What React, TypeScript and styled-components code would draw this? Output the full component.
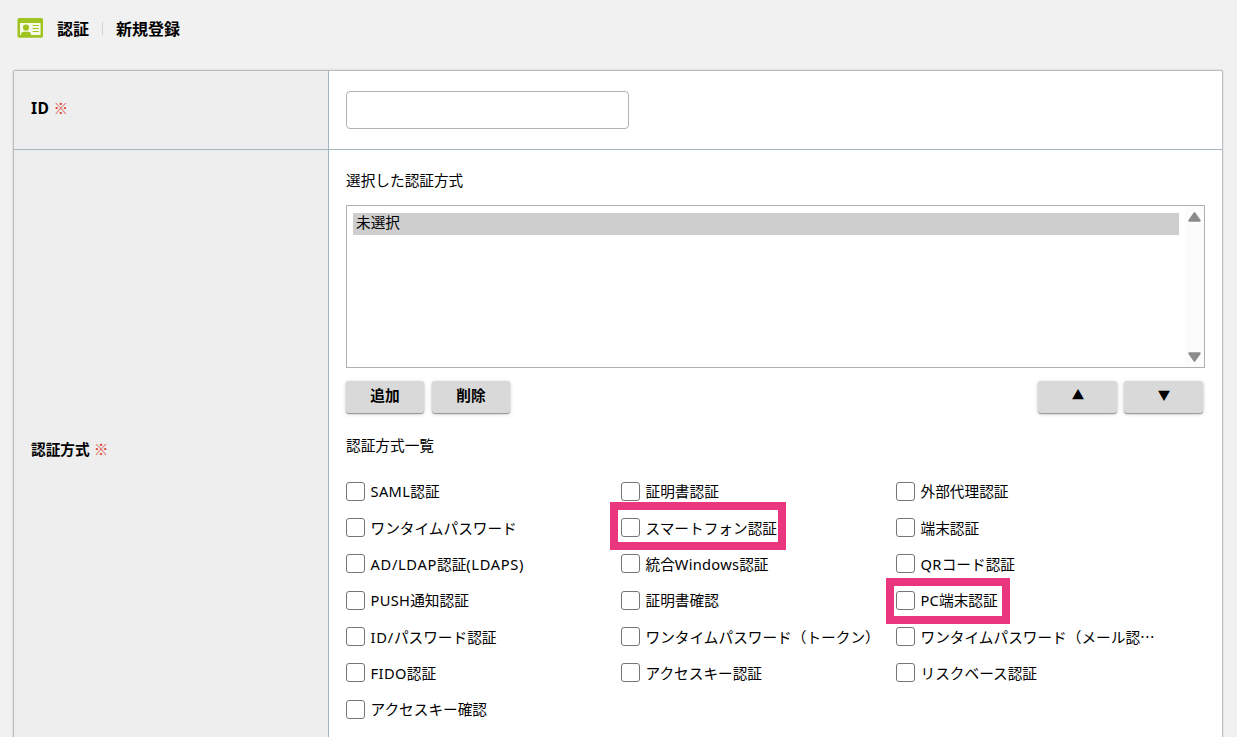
import React from "react";
import styled, { createGlobalStyle } from "styled-components";

const GlobalStyle = createGlobalStyle`
  *, *::before, *::after { box-sizing: border-box; }
  body {
    margin: 0;
    background: #f1f1f1;
    color: #000;
    font-family: "Noto Sans", "Noto Sans CJK JP", sans-serif;
    font-size: 14.67px;
    line-height: 22px;
  }
`;

const Page = styled.div`
  height: 100vh;
  overflow: hidden;
  padding: 0 14px 0 13px;
`;

const Header = styled.header`
  display: flex;
  align-items: center;
  height: 70px;
  padding: 0 0 14px 4px;
`;

const Crumb = styled.span`
  font-size: 16px;
  font-weight: 700;
  line-height: 24px;
  margin-top: 1px;
`;

const CardIcon = styled.svg`
  width: 26px;
  height: 20px;
  margin-right: 14px;
`;

const Divider = styled.span`
  width: 1px;
  height: 13px;
  margin: 1px 13px 0;
  background: #d4d4d4;
`;

const Form = styled.main`
  border: 1px solid #bcbcbc;
  border-radius: 2px 2px 0 0;
  background: #fff;
  box-shadow: 0 0 2px rgba(0, 0, 0, 0.18);
`;

const Row = styled.section<{ $height: number }>`
  display: grid;
  grid-template-columns: 315px 1fr;
  height: ${(p) => p.$height}px;
  border-bottom: 1px solid #a3b5bf;
`;

const Label = styled.div<{ $lift?: boolean }>`
  display: flex;
  align-items: center;
  gap: 4px;
  padding: 0 17px ${(p) => (p.$lift ? 4 : 2)}px;
  background: #eee;
  border-right: 1px solid #a3b5bf;
  font-weight: 700;
`;

const IdText = styled.span`
  font-size: 15.6px;
  letter-spacing: 0.5px;
`;

const Required = styled.span`
  color: #d9432f;
  font-weight: 400;
  font-family: "Noto Sans CJK JP", sans-serif;
`;

const Field = styled.div<{ $top: number }>`
  padding: ${(p) => p.$top}px 17px 0;
`;

const TextInput = styled.input`
  display: block;
  width: 283px;
  height: 38px;
  border: 1px solid #b3b3b3;
  border-radius: 4px;
  background: #fff;
`;

const Caption = styled.h2<{ $top?: number }>`
  margin: ${(p) => p.$top ?? 0}px 0 0;
  font-size: inherit;
  font-weight: 400;
  line-height: 22px;
`;

const ListBox = styled.div`
  display: flex;
  justify-content: space-between;
  width: 859px;
  height: 163px;
  margin-top: 14px;
  border: 1px solid #b0b0b0;
`;

const Options = styled.div`
  width: 832px;
  padding: 7px 0 0 6px;
`;

const Option = styled.div`
  height: 22px;
  padding-left: 3px;
  background: #cecece;
  line-height: 18px;
`;

const ScrollTrack = styled.div`
  display: flex;
  flex-direction: column;
  justify-content: space-between;
  align-items: center;
  width: 19px;
  padding: 6px 0 5px;
  background: #fcfcfc;
`;

const Arrow = styled.svg`
  width: 13px;
  height: 10px;
  fill: #8b8b8b;
`;

const Buttons = styled.div`
  display: flex;
  justify-content: space-between;
  width: 857px;
  margin-top: 13px;
`;

const ButtonPair = styled.div`
  display: flex;
  gap: 8px;
`;

const Button = styled.button`
  width: 78px;
  height: 32px;
  padding: 0 0 4px;
  border: 0;
  border-radius: 3px;
  background: #d9d9d9;
  box-shadow: 0 1px 1px rgba(0, 0, 0, 0.35), 0 1px 4px rgba(0, 0, 0, 0.2);
  color: #000;
  font: inherit;
  font-weight: 700;
  line-height: 20px;
`;

const MovePair = styled(ButtonPair)`
  gap: 7px;
`;

const MoveButton = styled(Button)`
  width: 79px;
  padding-left: 1px;
  font-family: "Noto Sans CJK JP", sans-serif;
  font-size: 12.5px;
  font-weight: 400;
`;

const Grid = styled.div`
  display: grid;
  grid-template-columns: repeat(3, 275px);
  grid-auto-rows: 36.35px;
  margin-top: 17.1px;
`;

const Choice = styled.label`
  position: relative;
  display: flex;
  align-items: center;
  gap: 5.5px;
  white-space: nowrap;
`;

const Checkbox = styled.input.attrs({ type: "checkbox" })`
  appearance: none;
  flex: none;
  width: 19px;
  height: 19px;
  margin: 0;
  border: 1px solid #767676;
  border-radius: 3px;
  background: #fff;
`;

const Latin = styled.span<{ $spacing: number }>`
  letter-spacing: ${(p) => p.$spacing}px;
`;

const Ellipsis = styled.span`
  font-family: "Noto Sans CJK JP", sans-serif;
`;

const Highlight = styled.span<{ $left: number; $top: number; $width: number; $height: number }>`
  position: absolute;
  left: ${(p) => p.$left}px;
  top: ${(p) => p.$top}px;
  width: ${(p) => p.$width}px;
  height: ${(p) => p.$height}px;
  border: 8px solid #ea367f;
  pointer-events: none;
`;

type Item = {
  name: string;
  spacing?: number;
  cut?: boolean;
  mark?: { $left: number; $top: number; $width: number; $height: number };
};

const items: Item[] = [
  { name: "SAML認証", spacing: 0.35 },
  { name: "証明書認証" },
  { name: "外部代理認証" },
  { name: "ワンタイムパスワード" },
  { name: "スマートフォン認証", mark: { $left: -11, $top: -7.25, $width: 176, $height: 48 } },
  { name: "端末認証" },
  { name: "AD/LDAP認証(LDAPS)", spacing: 0.66 },
  { name: "統合Windows認証", spacing: 0.25 },
  { name: "QRコード認証", spacing: 0.3 },
  { name: "PUSH通知認証", spacing: 0.3 },
  { name: "証明書確認" },
  { name: "PC端末認証", spacing: 0.2, mark: { $left: -10, $top: -4.25, $width: 124, $height: 46 } },
  { name: "ID/パスワード認証", spacing: 0.75 },
  { name: "ワンタイムパスワード（トークン）" },
  { name: "ワンタイムパスワード（メール認", cut: true },
  { name: "FIDO認証", spacing: 0.4 },
  { name: "アクセスキー認証" },
  { name: "リスクベース認証" },
  { name: "アクセスキー確認" },
];

function ChoiceName({ name, spacing = 0, cut }: Item) {
  const runs = name.split(/([A-Za-z/()]+)/).filter(Boolean);
  return (
    <span>
      {runs.map((run, i) =>
        /^[A-Za-z/()]/.test(run) ? (
          <Latin key={i} $spacing={spacing}>{run}</Latin>
        ) : (
          run
        )
      )}
      {cut && <Ellipsis>…</Ellipsis>}
    </span>
  );
}

export default function App() {
  return (
    <Page lang="ja">
      <GlobalStyle />
      <Header>
        <CardIcon viewBox="0 0 26 20">
          <rect x="0.5" width="25.5" height="19.7" rx="1.6" fill="#9fc31f" />
          <path d="M3 5h20.6v12h-20.6z" fill="#f6f9e8" />
          <circle cx="9" cy="9.6" r="3.1" fill="#9fc31f" />
          <path d="M4 17.4v-1.2c0-1.6 1.2-2.5 2.8-2.5h4.4c1.6 0 2.8.9 2.8 2.5v1.2z" fill="#9fc31f" />
          <path d="M15.6 7.5h6.2M15.6 10.5h6.2M15.6 13.5h6.2" stroke="#9fc31f" strokeWidth="1.1" />
        </CardIcon>
        <Crumb>認証</Crumb>
        <Divider />
        <Crumb>新規登録</Crumb>
      </Header>
      <Form>
        <Row $height={79}>
          <Label $lift>
            <IdText>ID</IdText>
            <Required>※</Required>
          </Label>
          <Field $top={20}>
            <TextInput aria-label="ID" />
          </Field>
        </Row>
        <Row $height={601}>
          <Label>
            認証方式<Required>※</Required>
          </Label>
          <Field $top={19}>
            <Caption>選択した認証方式</Caption>
            <ListBox>
              <Options>
                <Option>未選択</Option>
              </Options>
              <ScrollTrack>
                <Arrow viewBox="0 0 13 10">
                  <path d="M5.6.7a1.1 1.1 0 0 1 1.8 0l5.1 7.4c.5.8.1 1.6-.8 1.6H1.3C.4 9.7 0 8.9.5 8.1z" />
                </Arrow>
                <Arrow viewBox="0 0 13 10">
                  <path d="M5.6 9.3a1.1 1.1 0 0 0 1.8 0l5.1-7.4c.5-.8.1-1.6-.8-1.6H1.3C.4.3 0 1.1.5 1.9z" />
                </Arrow>
              </ScrollTrack>
            </ListBox>
            <Buttons>
              <ButtonPair>
                <Button>追加</Button>
                <Button>削除</Button>
              </ButtonPair>
              <MovePair>
                <MoveButton>▲</MoveButton>
                <MoveButton>▼</MoveButton>
              </MovePair>
            </Buttons>
            <Caption $top={21}>認証方式一覧</Caption>
            <Grid>
              {items.map((it) => (
                <Choice key={it.name}>
                  <Checkbox />
                  <ChoiceName {...it} />
                  {it.mark && <Highlight {...it.mark} />}
                </Choice>
              ))}
            </Grid>
          </Field>
        </Row>
      </Form>
    </Page>
  );
}
